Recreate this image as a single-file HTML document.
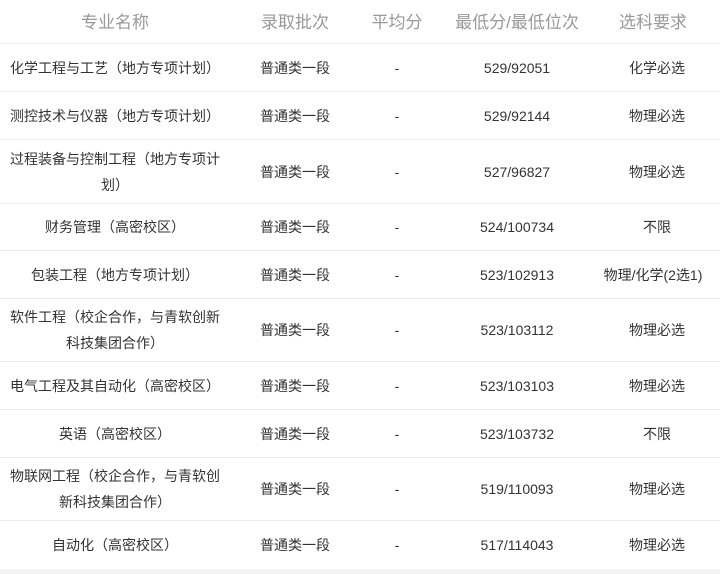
<!DOCTYPE html>
<html><head><meta charset="utf-8"><style>
html,body{margin:0;padding:0;background:#fff;width:720px;height:574px;overflow:hidden}
body{font-family:"Liberation Sans","Noto Sans CJK SC",sans-serif;color:#333;font-size:14px}
table{border-collapse:collapse;width:720px;table-layout:fixed}
th{font-weight:normal;color:#999;font-size:17px;height:41px;text-align:center;padding:0 0 2px 0}
td{text-align:center;border-top:1px solid #ececec;padding:0 8px;line-height:26px}
.bot{position:absolute;left:0;top:569px;width:720px;height:5px;background:#f3f3f3}
</style></head><body>
<table>
<colgroup><col style="width:230px"><col style="width:130px"><col style="width:74px"><col style="width:166px"><col style="width:120px"></colgroup>
<tr><th>专业名称</th><th>录取批次</th><th>平均分</th><th>最低分/最低位次</th><th style="padding-right:14px">选科要求</th></tr>
<tr style="height:48px"><td>化学工程与工艺（地方专项计划）</td><td>普通类一段</td><td>-</td><td>529/92051</td><td style="padding-right:14px">化学必选</td></tr>
<tr style="height:48px"><td>测控技术与仪器（地方专项计划）</td><td>普通类一段</td><td>-</td><td>529/92144</td><td style="padding-right:14px">物理必选</td></tr>
<tr style="height:64px"><td>过程装备与控制工程（地方专项计划）</td><td>普通类一段</td><td>-</td><td>527/96827</td><td style="padding-right:14px">物理必选</td></tr>
<tr style="height:47px"><td>财务管理（高密校区）</td><td>普通类一段</td><td>-</td><td>524/100734</td><td style="padding-right:14px">不限</td></tr>
<tr style="height:48px"><td>包装工程（地方专项计划）</td><td>普通类一段</td><td>-</td><td>523/102913</td><td style="white-space:nowrap;padding:0 14px 0 0">物理/化学(2选1)</td></tr>
<tr style="height:63px"><td>软件工程（校企合作，与青软创新科技集团合作）</td><td>普通类一段</td><td>-</td><td>523/103112</td><td style="padding-right:14px">物理必选</td></tr>
<tr style="height:48px"><td>电气工程及其自动化（高密校区）</td><td>普通类一段</td><td>-</td><td>523/103103</td><td style="padding-right:14px">物理必选</td></tr>
<tr style="height:48px"><td>英语（高密校区）</td><td>普通类一段</td><td>-</td><td>523/103732</td><td style="padding-right:14px">不限</td></tr>
<tr style="height:63px"><td>物联网工程（校企合作，与青软创新科技集团合作）</td><td>普通类一段</td><td>-</td><td>519/110093</td><td style="padding-right:14px">物理必选</td></tr>
<tr style="height:48px"><td>自动化（高密校区）</td><td>普通类一段</td><td>-</td><td>517/114043</td><td style="padding-right:14px">物理必选</td></tr>
</table>
<div class="bot"></div>
</body></html>
